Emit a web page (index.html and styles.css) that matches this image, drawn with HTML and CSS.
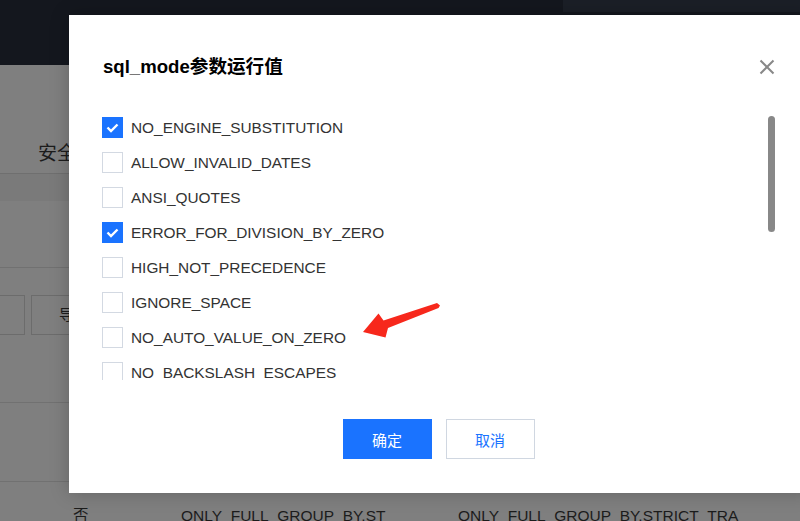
FILE: index.html
```html
<!DOCTYPE html>
<html lang="zh">
<head>
<meta charset="utf-8">
<title>sql_mode</title>
<link rel="stylesheet" href="styles.css">
</head>
<body>
<div class="bg">
  <div class="topbar"><div class="topbar-right"></div></div>
  <div class="tabs"><span class="tab">安全组</span></div>
  <div class="band"></div>
  <div class="sec"></div>
  <div class="toolbar">
    <div class="tbox tbox-a"></div>
    <div class="tbox tbox-b">导出</div>
  </div>
  <div class="sec2"></div>
  <div class="row">
    <span class="cell c1">否</span>
    <span class="cell c2">ONLY_FULL_GROUP_BY,ST</span>
    <span class="cell c3">ONLY_FULL_GROUP_BY,STRICT_TRA</span>
  </div>
</div>

<div class="modal">
  <div class="modal-head">
    <h3 class="modal-title">sql_mode参数运行值</h3>
    <svg class="close" width="16" height="16" viewBox="0 0 16 16"><path d="M1.5 1.5 L14.5 14.5 M14.5 1.5 L1.5 14.5" stroke="#888" stroke-width="2" fill="none"/></svg>
  </div>
  <div class="list">
    <label class="item"><span class="cb on"><svg width="21" height="21" viewBox="0 0 21 21"><path d="M5.5 10.5 L9 14 L15.5 7.5" stroke="#fff" stroke-width="2.4" fill="none"/></svg></span><span class="txt">NO_ENGINE_SUBSTITUTION</span></label>
    <label class="item"><span class="cb"></span><span class="txt">ALLOW_INVALID_DATES</span></label>
    <label class="item"><span class="cb"></span><span class="txt">ANSI_QUOTES</span></label>
    <label class="item"><span class="cb on"><svg width="21" height="21" viewBox="0 0 21 21"><path d="M5.5 10.5 L9 14 L15.5 7.5" stroke="#fff" stroke-width="2.4" fill="none"/></svg></span><span class="txt">ERROR_FOR_DIVISION_BY_ZERO</span></label>
    <label class="item"><span class="cb"></span><span class="txt">HIGH_NOT_PRECEDENCE</span></label>
    <label class="item"><span class="cb"></span><span class="txt">IGNORE_SPACE</span></label>
    <label class="item"><span class="cb"></span><span class="txt">NO_AUTO_VALUE_ON_ZERO</span></label>
    <label class="item"><span class="cb"></span><span class="txt">NO_BACKSLASH_ESCAPES</span></label>
    <label class="item"><span class="cb"></span><span class="txt">NO_DIR_IN_CREATE</span></label>
    <label class="item"><span class="cb"></span><span class="txt">NO_UNSIGNED_SUBTRACTION</span></label>
    <label class="item"><span class="cb"></span><span class="txt">NO_ZERO_DATE</span></label>
    <div class="thumb"></div>
  </div>
  <div class="footer">
    <button class="btn primary">确定</button>
    <button class="btn">取消</button>
  </div>
</div>

<svg class="annot" width="800" height="521" viewBox="0 0 800 521">
  <polygon points="363,332 378.5,313.5 383.5,320.5 437,303 440,305.5 438.5,308 388,328 385.5,337.5" fill="#f7281c"/>
</svg>
</body>
</html>
```

FILE: styles.css
```css
html, body {
  margin: 0;
  padding: 0;
}
body {
  width: 800px;
  height: 521px;
  overflow: hidden;
  position: relative;
  font-family: "Liberation Sans", "Noto Sans CJK SC", sans-serif;
  background: #7f7f7f;
}

/* background page (already under the mask) */
.bg {
  display: flex;
  flex-direction: column;
  height: 521px;
  color: #1c1c1c;
}
.topbar {
  height: 65px;
  background: #14171e;
  display: flex;
  justify-content: flex-end;
  flex-shrink: 0;
}
.topbar-right {
  width: 237px;
  height: 12px;
  background: #1b1f27;
}
.tabs {
  height: 109px;
  display: flex;
  align-items: flex-end;
  padding: 0 0 7px 38px;
  box-sizing: border-box;
  border-bottom: 1px solid #6f6f6f;
  flex-shrink: 0;
}
.tab {
  font-size: 19px;
  line-height: 24px;
}
.band {
  height: 27px;
  background: #7a7a7a;
  flex-shrink: 0;
}
.sec {
  height: 66px;
  border-bottom: 1px solid #717171;
  flex-shrink: 0;
}
.toolbar {
  display: flex;
  gap: 6px;
  padding-top: 27px;
  height: 40px;
  flex-shrink: 0;
}
.tbox {
  height: 40px;
  box-sizing: border-box;
  border: 1px solid #6c6c6c;
  font-size: 15px;
  line-height: 38px;
}
.tbox-a {
  width: 36px;
  margin-left: -11px;
}
.tbox-b {
  width: 90px;
  padding-left: 27px;
}
.sec2 {
  margin-top: 67px;
  height: 78px;
  border-top: 1px solid #717171;
  border-bottom: 1px solid #717171;
  flex-shrink: 0;
}
.row {
  display: flex;
  padding-top: 24px;
  font-size: 15.5px;
  line-height: 20px;
  white-space: nowrap;
}
.c1 { margin-left: 73px; width: 108px; }
.c2 { width: 277px; }

/* modal */
.modal {
  position: absolute;
  left: 69px;
  top: 15px;
  width: 740px;
  height: 478px;
  background: #fff;
  box-shadow: 0 0 18px rgba(0, 0, 0, 0.22);
  box-sizing: border-box;
  padding: 40px 34px 34px 33px;
  display: flex;
  flex-direction: column;
}
.modal-head {
  display: flex;
  justify-content: space-between;
  align-items: center;
  height: 24px;
  padding-left: 1px;
}
.modal-title {
  margin: 0;
  font-size: 18.6px;
  font-weight: bold;
  line-height: 24px;
  color: #000;
}
.close {
  display: block;
}
.list {
  position: relative;
  margin-top: 31px;
  height: 270px;
  overflow: hidden;
}
.item {
  display: flex;
  align-items: center;
  height: 35px;
  gap: 8px;
}
.cb {
  width: 21px;
  height: 21px;
  box-sizing: border-box;
  border: 1px solid #d3d9e2;
  background: #fff;
  flex-shrink: 0;
}
.cb.on {
  background: #1a73ff;
  border-color: #1a73ff;
}
.cb svg {
  display: block;
  margin: -1px;
}
.txt {
  font-size: 15.4px;
  color: #333;
  white-space: nowrap;
}
.thumb {
  position: absolute;
  right: 0;
  top: 6px;
  width: 7px;
  height: 116px;
  border-radius: 4px;
  background: #888;
}
.footer {
  margin-top: 39px;
  display: flex;
  justify-content: center;
  gap: 14px;
}
.btn {
  width: 89px;
  height: 40px;
  box-sizing: border-box;
  border: 1px solid #d0d7e1;
  background: #fff;
  color: #1a73ff;
  font-family: "Liberation Sans", "Noto Sans CJK SC", sans-serif;
  font-size: 15px;
  padding: 0;
}
.btn.primary {
  background: #1a73ff;
  border-color: #1a73ff;
  color: #fff;
}

.annot {
  position: absolute;
  left: 0;
  top: 0;
  pointer-events: none;
}
```
